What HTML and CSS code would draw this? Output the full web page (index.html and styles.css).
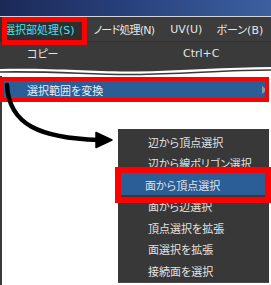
FILE: index.html
```html
<!DOCTYPE html>
<html lang="ja">
<head>
<meta charset="utf-8">
<link rel="stylesheet" href="styles.css">
</head>
<body>
<div class="screen">
  <div class="titlebar"></div>
  <div class="menubar">
    <span class="mb-item active">選択部処理(S)</span>
    <span class="mb-item node">ノード処理(N)</span>
    <span class="mb-item uv">UV(U)</span>
    <span class="mb-item">ボーン(B)</span>
  </div>
  <div class="dropdown">
    <div class="dd-row"><span class="dd-label">コピー</span><span class="dd-key">Ctrl+C</span></div>
  </div>
  <svg class="tear" width="271" height="12" viewBox="0 0 271 12">
    <rect x="0" y="0" width="271" height="12" fill="#3a3a3a"/>
    <path d="M0 5 C 60 4, 90 8, 135 7.5 S 230 3, 271 3 V12 H0 Z" fill="#ffffff"/>
    <path d="M0 8 C 60 7, 90 11, 135 10.5 S 230 6, 271 6" fill="none" stroke="#3a3a3a" stroke-width="1.6"/>
  </svg>
  <div class="lower">
    <div class="parent-row">
      <span class="pr-label">選択範囲を変換</span>
      <svg class="sub-arrow" width="5" height="8" viewBox="0 0 5 8"><path d="M0 0 L5 4 L0 8 Z" fill="#8a9aaa"/></svg>
    </div>
    <div class="submenu">
      <div class="sm-item">辺から頂点選択</div>
      <div class="sm-item">辺から線ポリゴン選択</div>
      <div class="sm-item selected">面から頂点選択</div>
      <div class="sm-item">面から辺選択</div>
      <div class="sm-item">頂点選択を拡張</div>
      <div class="sm-item">面選択を拡張</div>
      <div class="sm-item">接続面を選択</div>
    </div>
  </div>
  <svg class="annotations" width="271" height="285" viewBox="0 0 271 285">
    <rect x="4.5" y="19.5" width="80" height="23" fill="none" stroke="#ff0000" stroke-width="5"/>
    <rect x="2" y="79" width="265" height="21" fill="none" stroke="#ff0000" stroke-width="4"/>
    <rect x="118" y="170" width="150" height="30" fill="none" stroke="#ff0000" stroke-width="6"/>
    <path d="M7 85 C 9 125, 40 138, 99 140" fill="none" stroke="#000" stroke-width="4.5" stroke-linecap="round"/>
    <path d="M96 132.5 L112 140 L96 147.5 Z" fill="#000" stroke="#000" stroke-width="1.5" stroke-linejoin="round"/>
  </svg>
</div>
</body>
</html>
```

FILE: styles.css
```css
* { box-sizing: border-box; }
html, body { margin: 0; padding: 0; background: #ffffff; }
body {
  font-family: "DejaVu Sans", "Noto Sans CJK JP", sans-serif;
  font-size: 11px;
  font-feature-settings: "palt";
}
.screen {
  position: relative;
  width: 271px;
  height: 285px;
  overflow: hidden;
  display: flex;
  flex-direction: column;
  background: #ffffff;
}
.titlebar {
  height: 17px;
  flex: none;
  background: linear-gradient(90deg, #1b2957 0%, #27407a 45%, #3d60a2 100%);
  border-bottom: 1px solid #d4d6de;
}
.menubar {
  height: 25px;
  flex: none;
  display: flex;
  align-items: center;
  background: #3c3c3c;
  color: #e6e6e6;
  border-bottom: 1px solid #333333;
}
.mb-item {
  height: 100%;
  display: flex;
  align-items: center;
  padding: 0 8px;
  white-space: nowrap;
}
.mb-item.active {
  margin-left: -4px;
  padding-right: 11px;
  background: #2e2e2e;
  color: #3fe3ee;
}
.mb-item.node { letter-spacing: -0.8px; }
.mb-item.uv { padding-right: 6px; }
.dropdown {
  height: 22px;
  flex: none;
  background: #3a3a3a;
  color: #e4e4e4;
}
.dd-row {
  height: 22px;
  display: flex;
  align-items: center;
  padding-left: 27px;
}
.dd-label { width: 156px; }
.tear { display: block; flex: none; }
.lower {
  position: relative;
  flex: 1;
  border-left: 2px solid #3a3a3a;
  padding-top: 5px;
}
.parent-row {
  height: 17px;
  margin: 0 6px 0 2px;
  background: #2b5e97;
  color: #e8eef6;
  display: flex;
  align-items: center;
  justify-content: space-between;
  padding-left: 23px;
  padding-right: 0;
}
.sub-arrow { display: block; margin-right: -2px; }
.submenu {
  position: absolute;
  left: 116px;
  top: 53px;
  width: 151px;
  height: 154px;
  background: #383838;
  border-bottom: 1px solid #4a4a4a;
  padding-top: 1px;
  color: #e2e2e2;
}
.sm-item {
  height: 21.5px;
  display: flex;
  align-items: center;
  padding-left: 27px;
  padding-top: 2px;
  margin: 0 4px 0 3px;
  white-space: nowrap;
}
.sm-item.selected {
  background: #2b5e97;
  padding-left: 24px;
}
.annotations {
  position: absolute;
  left: 0;
  top: 0;
  pointer-events: none;
}
```
